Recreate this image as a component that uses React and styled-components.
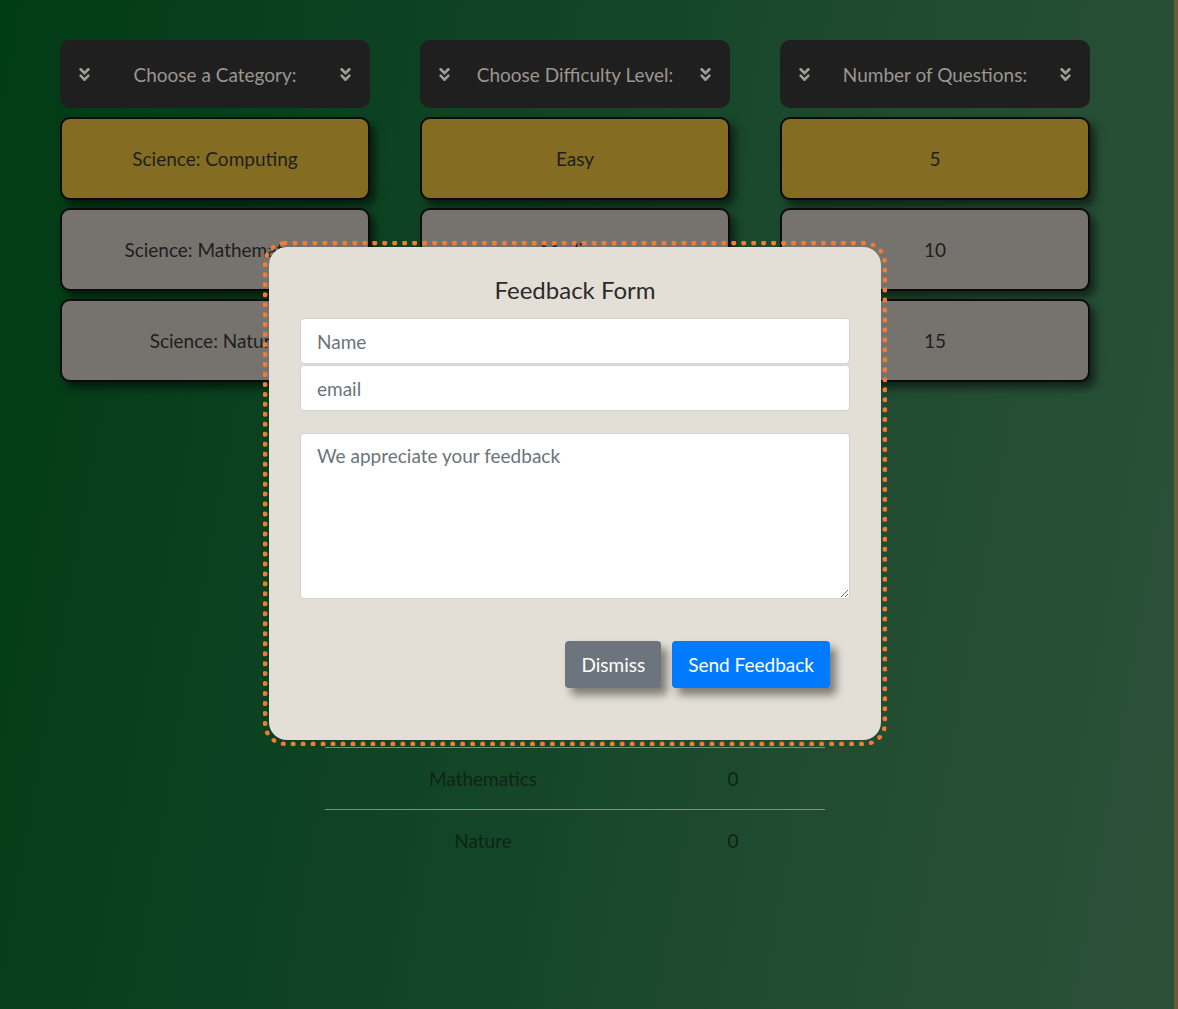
import React from "react";
import styled, { createGlobalStyle } from "styled-components";
import { FaAngleDoubleDown } from "react-icons/fa";

const GlobalStyle = createGlobalStyle`
    html, body {
        margin: 0;
        padding: 0;
    }
    body {
        font-family: Lato, "Open Sans", Arial, sans-serif;
    }
    * {
        box-sizing: border-box;
    }
`;

const Page = styled.div`
    min-height: 100vh;
    width: 100%;
    background: linear-gradient(100deg, #003c15 0%, #134527 45%, #234d33 75%, #2b5139 100%);
    border-right: 4px solid #6a5a37;
`;

const Content = styled.div`
    width: 1150px;
    padding: 40px 60px 0 60px;
`;

const Columns = styled.div`
    display: grid;
    grid-template-columns: repeat(3, 310px);
    gap: 50px;
`;

const Column = styled.div`
    display: flex;
    flex-direction: column;
    gap: 8px;
`;

const ColumnHeader = styled.div`
    height: 68px;
    margin-bottom: 1px;
    background: #1f1f20;
    border-radius: 10px;
    display: flex;
    align-items: center;
    justify-content: space-between;
    padding: 0 16px;
    color: #9b968f;
    font-size: 19px;
    line-height: 1;

    svg {
        width: 17px;
        height: 17px;
        color: #a29d96;
    }
`;

const Option = styled.button`
    height: 83px;
    width: 100%;
    border: 2px solid #0b0b0b;
    border-radius: 10px;
    background: ${(p) => (p.$active ? "#846c22" : "#76736e")};
    color: #1e1e1e;
    font-family: inherit;
    font-size: 19px;
    line-height: 1;
    box-shadow: 5px 6px 9px rgba(0, 0, 0, 0.55);
    cursor: pointer;
`;

const ScoreTable = styled.div`
    width: 500px;
    margin: 303px 0 0 265px;
`;

const ScoreRow = styled.div`
    display: grid;
    grid-template-columns: 316px 184px;
    height: 62px;
    align-items: center;
    text-align: center;
    color: #0f2416;
    font-size: 19px;
    line-height: 1;
    border-top: ${(p) => (p.$first ? "none" : "1px solid #7f8d83")};
`;

const Overlay = styled.div`
    position: fixed;
    top: 0;
    left: 0;
    width: 1150px;
    height: 100vh;
    display: flex;
    justify-content: center;
    align-items: flex-start;
    padding-top: 241px;
`;

const DottedFrame = styled.div`
    border: 5px dotted #f27b36;
    border-radius: 22px;
    padding: 1px;
`;

const Panel = styled.form`
    width: 612px;
    height: 493px;
    background: #e3dfd6;
    border-radius: 18px;
    padding: 28px 31px 0 31px;
    display: flex;
    flex-direction: column;
`;

const Title = styled.h2`
    margin: 0 0 13px 0;
    text-align: center;
    font-weight: 400;
    font-size: 24px;
    line-height: 30px;
    color: #2b2b2b;
`;

const Input = styled.input`
    height: 46px;
    width: 100%;
    margin-bottom: 1px;
    border: 1px solid #cfd3d8;
    border-radius: 4px;
    background: #fff;
    padding: 0 16px;
    font-family: inherit;
    font-size: 19px;
    color: #495057;

    &::placeholder {
        color: #6c737a;
    }
`;

const TextArea = styled.textarea`
    height: 166px;
    width: 100%;
    margin-top: 21px;
    border: 1px solid #cfd3d8;
    border-radius: 4px;
    background: #fff;
    padding: 10px 16px;
    font-family: inherit;
    font-size: 19px;
    color: #495057;
    resize: vertical;

    &::placeholder {
        color: #6c737a;
    }
`;

const Actions = styled.div`
    display: flex;
    justify-content: flex-end;
    gap: 11px;
    margin-top: 42px;
    padding-right: 20px;
`;

const ActionButton = styled.button`
    height: 47px;
    padding: 0 16px;
    border: none;
    border-radius: 4px;
    background: ${(p) => (p.$primary ? "#007bff" : "#6c757d")};
    color: #fff;
    font-family: inherit;
    font-size: 19px;
    line-height: 1;
    box-shadow: 6px 7px 8px rgba(0, 0, 0, 0.45);
    cursor: pointer;
`;

const columns = [
    { title: "Choose a Category:", options: ["Science: Computing", "Science: Mathematics", "Science: Nature"] },
    { title: "Choose Difficulty Level:", options: ["Easy", "Medium", "Hard"] },
    { title: "Number of Questions:", options: ["5", "10", "15"] },
];

const scores = [
    ["Computing", "0"],
    ["Mathematics", "0"],
    ["Nature", "0"],
];

export default function App() {
    return (
        <Page>
            <GlobalStyle />
            <Content>
                <Columns>
                    {columns.map((col) => (
                        <Column key={col.title}>
                            <ColumnHeader>
                                <FaAngleDoubleDown />
                                <span>{col.title}</span>
                                <FaAngleDoubleDown />
                            </ColumnHeader>
                            {col.options.map((opt, i) => (
                                <Option key={opt} $active={i === 0}>{opt}</Option>
                            ))}
                        </Column>
                    ))}
                </Columns>
                <ScoreTable>
                    {scores.map(([name, value], i) => (
                        <ScoreRow key={name} $first={i === 0}>
                            <span>{name}</span>
                            <span>{value}</span>
                        </ScoreRow>
                    ))}
                </ScoreTable>
            </Content>
            <Overlay>
                <DottedFrame>
                    <Panel onSubmit={(e) => e.preventDefault()}>
                        <Title>Feedback Form</Title>
                        <Input type="text" placeholder="Name" />
                        <Input type="email" placeholder="email" />
                        <TextArea placeholder="We appreciate your feedback" />
                        <Actions>
                            <ActionButton type="button">Dismiss</ActionButton>
                            <ActionButton type="submit" $primary>Send Feedback</ActionButton>
                        </Actions>
                    </Panel>
                </DottedFrame>
            </Overlay>
        </Page>
    );
}
